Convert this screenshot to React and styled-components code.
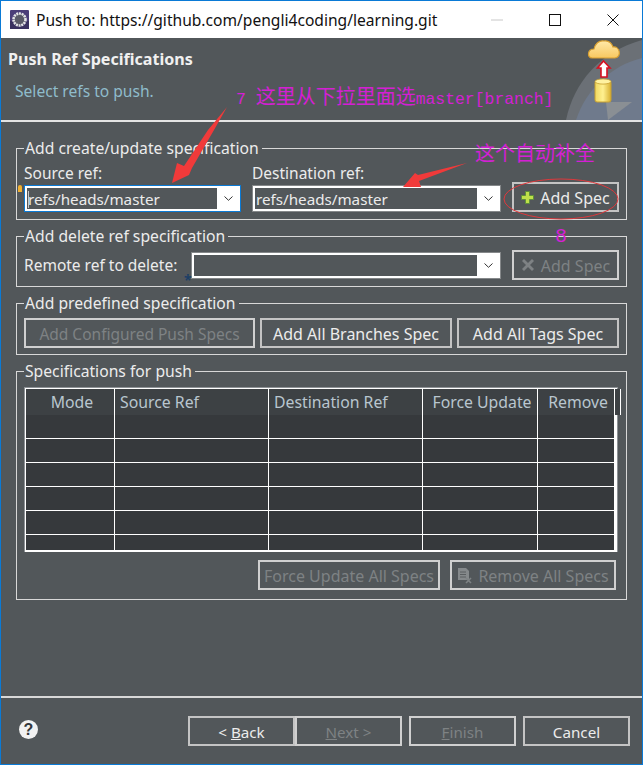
import React from "react";
import styled, { createGlobalStyle } from "styled-components";

const GlobalStyle = createGlobalStyle`
  html, body {
    margin: 0;
    padding: 0;
    background: #52575a;
  }
  * {
    box-sizing: border-box;
  }
`;

const Window = styled.div`
  position: relative;
  width: 643px;
  height: 765px;
  display: flex;
  flex-direction: column;
  overflow: hidden;
  border: 1px solid #0a7ad6;
  background: #52575a;
  color: #ececec;
  font-family: "Noto Sans", "Open Sans", sans-serif;
  font-size: 15.5px;
`;

const TitleBar = styled.div`
  flex: none;
  height: 37px;
  display: flex;
  align-items: center;
  padding-left: 9px;
  background: #fff;
  color: #111;
  font-size: 15.6px;
`;

const TitleText = styled.div`
  margin-left: 7px;
  flex: 1;
  white-space: nowrap;
`;

const CaptionButton = styled.div`
  width: 58px;
  height: 37px;
  display: flex;
  align-items: center;
  justify-content: center;
`;

const Header = styled.div`
  flex: none;
  height: 84px;
  display: flex;
  justify-content: space-between;
  background: #52575a;
  border-bottom: 2px solid #e4e4e4;
`;

const HeaderText = styled.div`
  padding: 11px 0 0 7px;
`;

const PageTitle = styled.div`
  font-weight: 700;
  font-size: 16.1px;
  line-height: 20px;
  color: #f0f0f0;
`;

const PageSubtitle = styled.div`
  margin: 12px 0 0 7px;
  line-height: 20px;
  font-size: 15.6px;
  color: #8fbccb;
`;

const Main = styled.div`
  flex: 1;
  display: flex;
  flex-direction: column;
  gap: 6px;
  padding: 16px 15px 0;
`;

const Group = styled.fieldset`
  margin: 0;
  padding: 0 7px;
  height: ${(p) => p.$height}px;
  min-width: 0;
  border: 1px solid #d8d8d8;
`;

const Legend = styled.legend`
  padding: 0 3px 0 1px;
  line-height: 20px;
  font-size: 15.7px;
  color: #ececec;
`;

const SpecRow = styled.div`
  display: flex;
  align-items: flex-end;
  gap: 11px;
  margin-top: 5px;
`;

const Field = styled.div`
  width: ${(p) => p.$width}px;
  display: flex;
  flex-direction: column;
`;

const FieldLabel = styled.div`
  line-height: 20px;
  margin-bottom: 2px;
`;

const InlineRow = styled.div`
  display: flex;
  align-items: center;
  gap: 5px;
  margin-top: 4px;
`;

const InlineLabel = styled.div`
  width: 163px;
  white-space: nowrap;
`;

const Combo = styled.div`
  width: ${(p) => p.$width || 100}px;
  flex: none;
  height: 27px;
  display: flex;
  align-items: stretch;
  background: #fff;
  padding: 2px 0 2px 2px;
  border: 1px solid ${(p) => (p.$focused ? "#0a7ad6" : "#85888a")};
`;

const ComboValue = styled.div`
  flex: 1;
  display: flex;
  align-items: center;
  padding-left: 1px;
  background: #52575a;
  color: #ececec;
  white-space: nowrap;
  font-size: 15.2px;
`;

const ComboArrow = styled.div`
  width: 23px;
  display: flex;
  align-items: center;
  justify-content: center;
`;

const Button = styled.div`
  width: ${(p) => p.$width}px;
  height: 30px;
  flex: none;
  display: flex;
  align-items: center;
  justify-content: center;
  gap: 6px;
  margin-left: ${(p) => p.$gap || 0}px;
  padding-top: 2px;
  border: 2px solid ${(p) => (p.$disabled ? "#d0d0d0" : "#c4c4c4")};
  background: #52575a;
  color: ${(p) => (p.$disabled ? "#7e8284" : "#ececec")};
  white-space: nowrap;
  font-size: ${(p) => p.$size || 16}px;

  svg {
    margin-top: -2px;
  }
`;

const ButtonRow = styled.div`
  display: flex;
  gap: 5px;
  margin-top: 5px;
`;

const SpecButtonRow = styled.div`
  display: flex;
  justify-content: flex-end;
  gap: 10px;
  margin: 8px 3px 0 0;
`;

const TableFrame = styled.div`
  width: 594px;
  height: 165px;
  margin-top: 6px;
  border: 1px solid #8e9296;
  border-width: 1px 1px 0 1px;
`;

const SpecTable = styled.div`
  display: grid;
  grid-template-columns: 89px 154px 154px 115px 77px 1px;
  grid-template-rows: 26px 24px 24px 24px 24px 24px 15px;
  height: 164px;
  background: #36393c;
  border: 1px solid #fff;
  border-width: 1px 1px 2px 1px;
`;

const HeaderCell = styled.div`
  background: #3d4144;
  color: #b9c6cf;
  display: flex;
  align-items: center;
  justify-content: ${(p) => (p.$center ? "center" : "flex-start")};
  padding-left: ${(p) => (p.$center ? 4 : 5)}px;
  border-right: 1px solid #fff;
  font-size: 15.8px;
  white-space: nowrap;
`;

const BodyCell = styled.div`
  border-right: 1px solid #fff;
  border-bottom: ${(p) => (p.$last ? "none" : "1px solid #fff")};
`;

const Footer = styled.div`
  flex: none;
  height: 68px;
  display: flex;
  align-items: flex-start;
  padding: 18px 12px 0 18px;
  border-top: 2px solid #d8d8d8;
`;

const HelpIcon = styled.div`
  width: 19px;
  height: 19px;
  margin-top: 4px;
  border-radius: 50%;
  background: #f2f2f2;
  color: #34383c;
  font-family: "Liberation Sans", sans-serif;
  font-weight: 700;
  font-size: 16px;
  line-height: 19px;
  text-align: center;
`;

const FooterButtons = styled.div`
  margin-left: auto;
  display: flex;
`;

const Mnemonic = styled.span`
  text-decoration: underline;
`;

const Annotations = styled.svg`
  position: absolute;
  left: -1px;
  top: -1px;
  pointer-events: none;
`;

const Note = styled.div`
  position: absolute;
  left: ${(p) => p.$x}px;
  top: ${(p) => p.$y}px;
  color: #d41fd4;
  font-family: "Liberation Mono", "Noto Sans CJK SC", monospace;
  font-size: 20px;
  line-height: 24px;
  white-space: nowrap;
`;

const NoteMono = styled.span`
  font-size: 16.4px;
`;

const Bulb = styled.div`
  position: absolute;
  left: 17px;
  top: 184px;
  width: 4px;
  height: 7px;
  background: #f0b030;
  border-radius: 2px 2px 0 0;
`;

const RequiredMark = styled.div`
  position: absolute;
  left: 183px;
  top: 272px;
  color: #1d3f66;
  font-size: 14px;
  font-weight: 700;
  line-height: 14px;
`;

const Caret = styled.div`
  position: absolute;
  left: 27px;
  top: 190px;
  width: 1px;
  height: 17px;
  background: #c8c8c8;
`;

const ChevronDown = () => (
  <svg width="9" height="5" viewBox="0 0 9 5" fill="none" stroke="#333" strokeWidth="1">
    <path d="M0.5 0.5 L4.5 4.3 L8.5 0.5" />
  </svg>
);

const AppIcon = () => (
  <svg width="19" height="19" viewBox="0 0 19 19">
    <rect width="19" height="19" rx="1" fill="#4b3d78" />
    <rect y="11" width="19" height="8" fill="#3a3160" />
    <circle cx="9.5" cy="9.5" r="6" fill="#5a5a68" stroke="#e4e4e6" strokeWidth="2.6" strokeDasharray="2 0.7" />
  </svg>
);

const PlusIcon = () => (
  <svg width="13" height="13" viewBox="0 0 13 13">
    <path d="M4.5 0.5h4v4h4v4h-4v4h-4v-4h-4v-4h4z" fill="#bfe04a" stroke="#5f8f3a" strokeWidth="1" />
  </svg>
);

const CrossIcon = () => (
  <svg width="14" height="14" viewBox="0 0 14 14">
    <path d="M3 1 L7 5 L11 1 L13 3 L9 7 L13 11 L11 13 L7 9 L3 13 L1 11 L5 7 L1 3 Z" fill="#7e8284" />
  </svg>
);

const RemoveAllIcon = () => (
  <svg width="15" height="17" viewBox="0 0 15 17">
    <path d="M1 1h8l3 3v9H1z" fill="#85898b" />
    <path d="M3 5h6M3 7.5h6M3 10h6" stroke="#5a5e60" strokeWidth="1" />
    <path d="M9 11l5 5M14 11l-5 5" stroke="#7e8284" strokeWidth="1.6" />
  </svg>
);

const WizardBanner = () => (
  <svg width="76" height="82" viewBox="0 0 76 82">
    <defs>
      <linearGradient id="cloudFill" x1="0" y1="0" x2="0" y2="1">
        <stop offset="0" stopColor="#ffe9a8" />
        <stop offset="1" stopColor="#f8c860" />
      </linearGradient>
      <linearGradient id="canFill" x1="0" y1="0" x2="1" y2="0">
        <stop offset="0" stopColor="#f0d860" />
        <stop offset="0.5" stopColor="#fff090" />
        <stop offset="1" stopColor="#d8b030" />
      </linearGradient>
    </defs>
    <path d="M0 82 C8 44 34 14 76 2 V82 Z" fill="#6b7076" />
    <path d="M10 82 C20 52 44 28 76 20 V82 Z" fill="#6f7a8c" />
    <path d="M42 82 L66 64 L40 64 Z" fill="#8a8f94" />
    <path
      d="M26 20 C21 20 21 11 28 11 C29 6 33 2 38 3 C43 2 46 6 47 9 C54 8 56 19 49 20 Z"
      fill="url(#cloudFill)"
      stroke="#d9a030"
      strokeWidth="1.2"
    />
    <path d="M37.5 23 L44 30 H41 V39 H35 V30 H31.5 Z" fill="#fff" stroke="#d81020" strokeWidth="1.6" />
    <rect x="29" y="43" width="16" height="21" rx="2" fill="url(#canFill)" stroke="#c8a030" strokeWidth="1" />
    <ellipse cx="37" cy="43.5" rx="8" ry="2.6" fill="#fff2a0" stroke="#c8a030" strokeWidth="0.8" />
  </svg>
);

const COLUMNS = [
  { title: "Mode", center: true },
  { title: "Source Ref" },
  { title: "Destination Ref" },
  { title: "Force Update", center: true },
  { title: "Remove", center: true },
  { title: "" },
];

const ROW_COUNT = 6;

const App = () => {
  const rows = Array.from({ length: ROW_COUNT }, (_, i) => i);

  return (
    <>
      <GlobalStyle />
      <Window>
        <TitleBar>
          <AppIcon />
          <TitleText>Push to: https://github.com/pengli4coding/learning.git</TitleText>
          <CaptionButton>
            <svg width="14" height="2" viewBox="0 0 14 2">
              <path d="M1 1h12" stroke="#c8c8c8" strokeWidth="1" />
            </svg>
          </CaptionButton>
          <CaptionButton>
            <svg width="12" height="12" viewBox="0 0 12 12" fill="none">
              <rect x="0.5" y="0.5" width="11" height="11" stroke="#111" />
            </svg>
          </CaptionButton>
          <CaptionButton>
            <svg width="12" height="12" viewBox="0 0 12 12" stroke="#111" strokeWidth="1">
              <path d="M0.5 0.5 L11.5 11.5 M11.5 0.5 L0.5 11.5" />
            </svg>
          </CaptionButton>
        </TitleBar>

        <Header>
          <HeaderText>
            <PageTitle>Push Ref Specifications</PageTitle>
            <PageSubtitle>Select refs to push.</PageSubtitle>
          </HeaderText>
          <WizardBanner />
        </Header>

        <Main>
          <Group $height={82}>
            <Legend>Add create/update specification</Legend>
            <SpecRow>
              <Field $width={217}>
                <FieldLabel>Source ref:</FieldLabel>
                <Combo $width={217} $focused>
                  <ComboValue>refs/heads/master</ComboValue>
                  <ComboArrow>
                    <ChevronDown />
                  </ComboArrow>
                </Combo>
              </Field>
              <Field $width={249}>
                <FieldLabel>Destination ref:</FieldLabel>
                <Combo $width={249}>
                  <ComboValue>refs/heads/master</ComboValue>
                  <ComboArrow>
                    <ChevronDown />
                  </ComboArrow>
                </Combo>
              </Field>
              <Button $width={107}>
                <PlusIcon />
                Add Spec
              </Button>
            </SpecRow>
          </Group>

          <Group $height={61}>
            <Legend>Add delete ref specification</Legend>
            <InlineRow>
              <InlineLabel>Remote ref to delete:</InlineLabel>
              <Combo $width={310}>
                <ComboValue />
                <ComboArrow>
                  <ChevronDown />
                </ComboArrow>
              </Combo>
              <Button $width={107} $disabled $gap={6}>
                <CrossIcon />
                Add Spec
              </Button>
            </InlineRow>
          </Group>

          <Group $height={62}>
            <Legend>Add predefined specification</Legend>
            <ButtonRow>
              <Button $width={231} $size={15.5} $disabled>
                Add Configured Push Specs
              </Button>
              <Button $width={192}>Add All Branches Spec</Button>
              <Button $width={162}>Add All Tags Spec</Button>
            </ButtonRow>
          </Group>

          <Group $height={239}>
            <Legend>Specifications for push</Legend>
            <TableFrame>
              <SpecTable>
                {COLUMNS.map((col) => (
                  <HeaderCell key={col.title} $center={col.center}>
                    {col.title}
                  </HeaderCell>
                ))}
                {rows.map((row) =>
                  COLUMNS.map((col) => (
                    <BodyCell key={`${row}-${col.title}`} $last={row === ROW_COUNT - 1} />
                  ))
                )}
              </SpecTable>
            </TableFrame>
            <SpecButtonRow>
              <Button $width={182} $disabled>
                Force Update All Specs
              </Button>
              <Button $width={166} $disabled>
                <RemoveAllIcon />
                Remove All Specs
              </Button>
            </SpecButtonRow>
          </Group>
        </Main>

        <Footer>
          <HelpIcon>?</HelpIcon>
          <FooterButtons>
            <Button $width={107} $size={15.2}>
              <span>
                &lt; <Mnemonic>B</Mnemonic>ack
              </span>
            </Button>
            <Button $width={107} $size={15.2} $disabled>
              <span>
                <Mnemonic>N</Mnemonic>ext &gt;
              </span>
            </Button>
            <Button $width={107} $size={15.2} $disabled $gap={7}>
              <span>
                <Mnemonic>F</Mnemonic>inish
              </span>
            </Button>
            <Button $width={107} $size={15.2} $gap={7}>
              Cancel
            </Button>
          </FooterButtons>
        </Footer>

        <Bulb />
        <RequiredMark>*</RequiredMark>
        <Caret />

        <Annotations width="643" height="765" viewBox="0 0 643 765">
          <path
            d="M227 107 L214 130 L192 168 L189 175 L172 183 L177 163 L184 166 L208 130 Z"
            fill="#f03a3a"
          />
          <path d="M467 163 L418 175 L415 173 L403 187 L421 187 L419 181 Z" fill="#f03a3a" />
          <ellipse cx="561" cy="199" rx="57" ry="20" fill="none" stroke="#e0383c" strokeWidth="1" />
        </Annotations>
        <Note $x={235} $y={86}>
          <NoteMono>7 </NoteMono>这里从下拉里面选<NoteMono>master[branch]</NoteMono>
        </Note>
        <Note $x={474} $y={143}>
          这个自动补全
        </Note>
        <Note $x={554} $y={224}>
          8
        </Note>
      </Window>
    </>
  );
};

export default App;
